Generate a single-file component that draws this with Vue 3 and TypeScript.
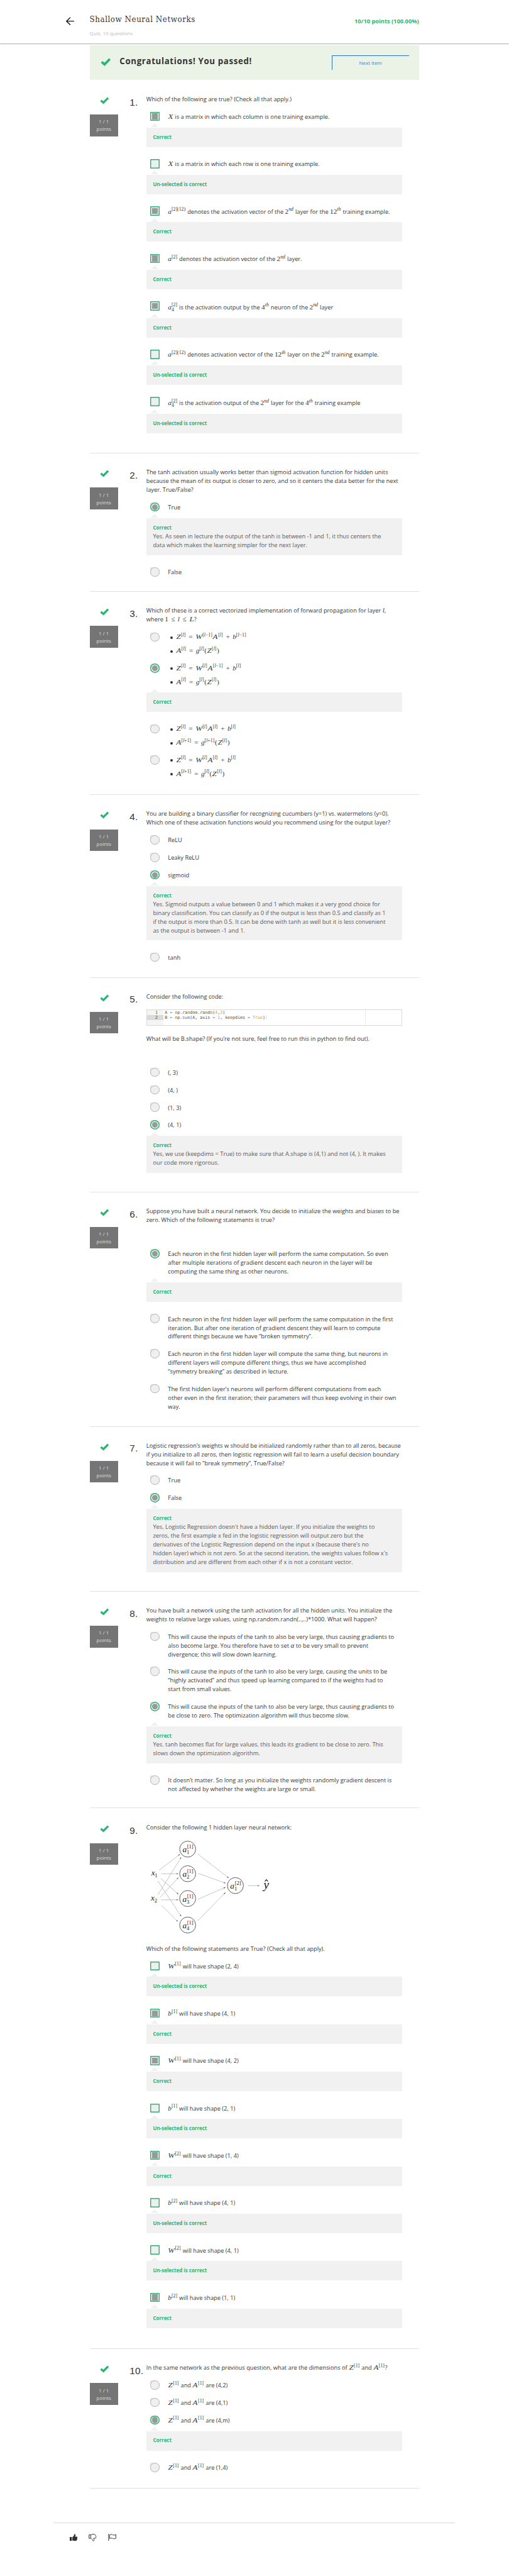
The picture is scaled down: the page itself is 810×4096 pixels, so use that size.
<script setup lang="ts">
import { h, type FunctionalComponent } from 'vue'

/**
 * Text with inline formulas: "$...$" marks a formula, and inside it
 * "^{...}" is raised and "_{...}" lowered, under whatever follows it.
 */
const letters = (s: string) =>
  s
    .split(/([A-Z]|[a-zα]+)/)
    .filter(Boolean)
    .map((part) => {
      if (/[A-Z]/.test(part)) return h('i', { class: 'cap' }, part)
      return /[a-zα]/.test(part) ? h('i', part) : part
    })

const formula = (src: string) =>
  src
    .split(/([\^_]\{[^}]*\})/)
    .filter(Boolean)
    .map((part) => {
      if (part.startsWith('^{')) return h('span', { class: 'up' }, letters(part.slice(2, -1)))
      if (part.startsWith('_{')) return h('span', { class: 'down' }, letters(part.slice(2, -1)))
      return letters(part)
    })

const Rich: FunctionalComponent<{ text: string }> = (props) =>
  h(
    'span',
    { class: 'rich' },
    props.text.split('$').map((part, i) => (i % 2 ? h('span', { class: 'math' }, formula(part)) : part)),
  )
Rich.props = ['text']

interface Option {
  lines?: string[]
  bullets?: string[]
  on?: boolean
  tall?: boolean
  feedback?: string
  why?: string[]
}
interface Question {
  height: number
  shift?: number
  kind: 'box' | 'dot'
  prompt: string[]
  code?: boolean
  network?: boolean
  after?: string
  gap?: number
  options: Option[]
}

const OK = 'Correct'
const UN = 'Un-selected is correct'

const questions: Question[] = [
  {
    height: 896.2,
    shift: 2,
    kind: 'box',
    prompt: ['Which of the following are true? (Check all that apply.)'],
    options: [
      { lines: ['$X$ is a matrix in which each column is one training example.'], on: true, feedback: OK },
      { lines: ['$X$ is a matrix in which each row is one training example.'], feedback: UN },
      { lines: ['$a^{[2](12)}$ denotes the activation vector of the $2^{nd}$ layer for the $12^{th}$ training example.'], on: true, feedback: OK },
      { lines: ['$a^{[2]}$ denotes the activation vector of the $2^{nd}$ layer.'], on: true, feedback: OK },
      { lines: ['$a_{4}^{[2]}$ is the activation output by the $4^{th}$ neuron of the $2^{nd}$ layer'], on: true, tall: true, feedback: OK },
      { lines: ['$a^{[2](12)}$ denotes activation vector of the $12^{th}$ layer on the $2^{nd}$ training example.'], feedback: UN },
      { lines: ['$a_{4}^{[2]}$ is the activation output of the $2^{nd}$ layer for the $4^{th}$ training example'], tall: true, feedback: UN },
    ],
  },
  {
    height: 331.7,
    kind: 'dot',
    prompt: [
      'The tanh activation usually works better than sigmoid activation function for hidden units',
      'because the mean of its output is closer to zero, and so it centers the data better for the next',
      'layer. True/False?',
    ],
    options: [
      {
        lines: ['True'],
        on: true,
        feedback: OK,
        why: [
          'Yes. As seen in lecture the output of the tanh is between -1 and 1, it thus centers the',
          'data which makes the learning simpler for the next layer.',
        ],
      },
      { lines: ['False'] },
    ],
  },
  {
    height: 487.2,
    kind: 'dot',
    gap: 20.4,
    prompt: [
      'Which of these is a correct vectorized implementation of forward propagation for layer $l$,',
      'where $1 ≤ l ≤ L$?',
    ],
    options: [
      { bullets: ['$Z^{[l]} = W^{[l−1]}A^{[l]} + b^{[l−1]}$', '$A^{[l]} = g^{[l]}(Z^{[l]})$'] },
      { bullets: ['$Z^{[l]} = W^{[l]}A^{[l−1]} + b^{[l]}$', '$A^{[l]} = g^{[l]}(Z^{[l]})$'], on: true, feedback: OK },
      { bullets: ['$Z^{[l]} = W^{[l]}A^{[l]} + b^{[l]}$', '$A^{[l+1]} = g^{[l+1]}(Z^{[l]})$'] },
      { bullets: ['$Z^{[l]} = W^{[l]}A^{[l]} + b^{[l]}$', '$A^{[l+1]} = g^{[l]}(Z^{[l]})$'] },
    ],
  },
  {
    height: 437.6,
    kind: 'dot',
    prompt: [
      'You are building a binary classifier for recognizing cucumbers (y=1) vs. watermelons (y=0).',
      'Which one of these activation functions would you recommend using for the output layer?',
    ],
    options: [
      { lines: ['ReLU'] },
      { lines: ['Leaky ReLU'] },
      {
        lines: ['sigmoid'],
        on: true,
        feedback: OK,
        why: [
          'Yes. Sigmoid outputs a value between 0 and 1 which makes it a very good choice for',
          'binary classification. You can classify as 0 if the output is less than 0.5 and classify as 1',
          'if the output is more than 0.5. It can be done with tanh as well but it is less convenient',
          'as the output is between -1 and 1.',
        ],
      },
      { lines: ['tanh'] },
    ],
  },
  {
    height: 514.9,
    kind: 'dot',
    prompt: ['Consider the following code:'],
    code: true,
    after: 'What will be B.shape? (If you’re not sure, feel free to run this in python to find out).',
    gap: 59,
    options: [
      { lines: ['(, 3)'] },
      { lines: ['(4, )'] },
      { lines: ['(1, 3)'] },
      {
        lines: ['(4, 1)'],
        on: true,
        feedback: OK,
        why: [
          'Yes, we use (keepdims = True) to make sure that A.shape is (4,1) and not (4, ). It makes',
          'our code more rigorous.',
        ],
      },
    ],
  },
  {
    height: 561.3,
    kind: 'dot',
    gap: 59,
    prompt: [
      'Suppose you have built a neural network. You decide to initialize the weights and biases to be',
      'zero. Which of the following statements is true?',
    ],
    options: [
      {
        lines: [
          'Each neuron in the first hidden layer will perform the same computation. So even',
          'after multiple iterations of gradient descent each neuron in the layer will be',
          'computing the same thing as other neurons.',
        ],
        on: true,
        feedback: OK,
      },
      {
        lines: [
          'Each neuron in the first hidden layer will perform the same computation in the first',
          'iteration. But after one iteration of gradient descent they will learn to compute',
          'different things because we have “broken symmetry”.',
        ],
      },
      {
        lines: [
          'Each neuron in the first hidden layer will compute the same thing, but neurons in',
          'different layers will compute different things, thus we have accomplished',
          '“symmetry breaking” as described in lecture.',
        ],
      },
      {
        lines: [
          'The first hidden layer’s neurons will perform different computations from each',
          'other even in the first iteration; their parameters will thus keep evolving in their own',
          'way.',
        ],
      },
    ],
  },
  {
    height: 395.2,
    kind: 'dot',
    prompt: [
      'Logistic regression’s weights w should be initialized randomly rather than to all zeros, because',
      'if you initialize to all zeros, then logistic regression will fail to learn a useful decision boundary',
      'because it will fail to “break symmetry”, True/False?',
    ],
    options: [
      { lines: ['True'] },
      {
        lines: ['False'],
        on: true,
        feedback: OK,
        why: [
          "Yes, Logistic Regression doesn't have a hidden layer. If you initialize the weights to",
          'zeros, the first example x fed in the logistic regression will output zero but the',
          "derivatives of the Logistic Regression depend on the input x (because there's no",
          "hidden layer) which is not zero. So at the second iteration, the weights values follow x's",
          'distribution and are different from each other if x is not a constant vector.',
        ],
      },
    ],
  },
  {
    height: 519.3,
    kind: 'dot',
    prompt: [
      'You have built a network using the tanh activation for all the hidden units. You initialize the',
      'weights to relative large values, using np.random.randn(..,..)*1000. What will happen?',
    ],
    options: [
      {
        lines: [
          'This will cause the inputs of the tanh to also be very large, thus causing gradients to',
          'also become large. You therefore have to set $α$ to be very small to prevent',
          'divergence; this will slow down learning.',
        ],
      },
      {
        lines: [
          'This will cause the inputs of the tanh to also be very large, causing the units to be',
          '“highly activated” and thus speed up learning compared to if the weights had to',
          'start from small values.',
        ],
      },
      {
        lines: [
          'This will cause the inputs of the tanh to also be very large, thus causing gradients to',
          'be close to zero. The optimization algorithm will thus become slow.',
        ],
        on: true,
        feedback: OK,
        why: [
          'Yes. tanh becomes flat for large values, this leads its gradient to be close to zero. This',
          'slows down the optimization algorithm.',
        ],
      },
      {
        lines: [
          'It doesn’t matter. So long as you initialize the weights randomly gradient descent is',
          'not affected by whether the weights are large or small.',
        ],
      },
    ],
  },
  {
    height: 1296,
    shift: 1.5,
    kind: 'box',
    prompt: ['Consider the following 1 hidden layer neural network:'],
    network: true,
    after: 'Which of the following statements are True? (Check all that apply).',
    options: [
      { lines: ['$W^{[1]}$ will have shape (2, 4)'], feedback: UN },
      { lines: ['$b^{[1]}$ will have shape (4, 1)'], on: true, feedback: OK },
      { lines: ['$W^{[1]}$ will have shape (4, 2)'], on: true, feedback: OK },
      { lines: ['$b^{[1]}$ will have shape (2, 1)'], feedback: UN },
      { lines: ['$W^{[2]}$ will have shape (1, 4)'], on: true, feedback: OK },
      { lines: ['$b^{[2]}$ will have shape (4, 1)'], feedback: UN },
      { lines: ['$W^{[2]}$ will have shape (4, 1)'], feedback: UN },
      { lines: ['$b^{[2]}$ will have shape (1, 1)'], on: true, feedback: OK },
    ],
  },
  {
    height: 335.2,
    kind: 'dot',
    prompt: ['In the same network as the previous question, what are the dimensions of $Z^{[1]}$ and $A^{[1]}$?'],
    options: [
      { lines: ['$Z^{[1]}$ and $A^{[1]}$ are (4,2)'] },
      { lines: ['$Z^{[1]}$ and $A^{[1]}$ are (4,1)'] },
      { lines: ['$Z^{[1]}$ and $A^{[1]}$ are (4,m)'], on: true, feedback: OK },
      { lines: ['$Z^{[1]}$ and $A^{[1]}$ are (1,4)'] },
    ],
  },
]

const edges = [
  [31, 91.2, 80.2, 53.4],
  [35.2, 100.1, 76, 100.1],
  [34.1, 110.9, 76.5, 149],
  [27.3, 117.6, 83.3, 201.6],
  [27.9, 150.1, 83.3, 60.9],
  [33.1, 156.6, 76.5, 109.4],
  [35.2, 162.6, 76, 162.6],
  [36.2, 175.5, 75, 214.4],
  [123.6, 53, 197.3, 110.1],
  [124.6, 99.1, 189.5, 122.6],
  [123.6, 161.2, 189.5, 132.6],
  [123.6, 212.3, 189.5, 145.1],
  [243.9, 128.7, 270.5, 128.7],
]
const nodes = [
  { x: 99, y: 41, layer: 1, unit: 1 },
  { x: 99, y: 100, layer: 1, unit: 2 },
  { x: 99, y: 159.5, layer: 1, unit: 3 },
  { x: 99, y: 223, layer: 1, unit: 4 },
  { x: 213.5, y: 128.4, layer: 2, unit: 1 },
]
</script>

<template>
  <div class="page">
    <header class="top">
      <svg class="back" viewBox="0 0 20 20" width="20" height="20">
        <path d="M19.5 10H1.5M10.5 1L1.2 10l9.3 9" fill="none" stroke="#1f1f1f" stroke-width="2.2" />
      </svg>
      <div class="names">
        <h1>Shallow Neural Networks</h1>
        <p>Quiz, 10 questions</p>
      </div>
      <strong class="score">10/10 points (100.00%)</strong>
    </header>

    <main class="body">
      <section class="banner">
        <svg class="tick big" viewBox="0 0 22 17">
          <path d="M2.2 8.8L8.4 14L19.8 2.4" />
        </svg>
        <h2>Congratulations! You passed!</h2>
        <a class="next">Next Item</a>
      </section>

      <section
        v-for="(q, i) in questions"
        :key="i"
        class="question"
        :style="{ height: q.height + 'px', paddingTop: 34.7 + (q.shift ?? 0) + 'px' }"
      >
        <aside class="side">
          <svg class="tick" viewBox="0 0 22 17"><path d="M2.2 8.8L8.4 14L19.8 2.4" /></svg>
          <div class="points"><span>1 / 1</span><span>points</span></div>
        </aside>
        <div class="number">{{ i + 1 }}.</div>
        <div class="content">
          <div class="prompt">
            <div v-for="l in q.prompt" :key="l" class="line"><Rich :text="l" /></div>
          </div>

          <div v-if="q.code" class="code">
            <div class="gutter">
              <span>1</span>
              <span class="active">2</span>
            </div>
            <div class="source">
              <div>A <b class="op">=</b> np.random.randn(<b class="num">4</b>,<b class="num">3</b>)</div>
              <div>
                B <b class="op">=</b> np.<b class="fn">sum</b>(A, axis <b class="op">=</b> <b class="num">1</b>, keepdims
                <b class="op">=</b> <b class="num">True</b>)<i class="caret"></i>
              </div>
            </div>
          </div>

          <svg v-if="q.network" class="network" viewBox="0 0 614 269" width="614" height="269">
            <defs>
              <marker id="tip" viewBox="0 0 4 4" refX="3.4" refY="2" markerWidth="4" markerHeight="4" orient="auto">
                <path d="M0 0.4L4 2L0 3.6z" fill="#777" />
              </marker>
            </defs>
            <line
              v-for="(e, k) in edges"
              :key="k"
              :x1="e[0]"
              :y1="e[1]"
              :x2="e[2]"
              :y2="e[3]"
              stroke="#b4b4b4"
              stroke-width="1.2"
              marker-end="url(#tip)"
            />
            <g v-for="n in nodes" :key="n.x + '-' + n.y">
              <circle :cx="n.x" :cy="n.y" r="19.2" fill="none" stroke="#333" stroke-width="1.2" />
              <text :x="n.x - 12.5" :y="n.y + 7.5" class="var">a</text>
              <text :x="n.x - 1.5" :y="n.y - 1.5" class="idx">[{{ n.layer }}]</text>
              <text :x="n.x - 2.5" :y="n.y + 12" class="idx">{{ n.unit }}</text>
            </g>
            <text x="11.5" y="104.5" class="var">x</text>
            <text x="20" y="108.5" class="idx">1</text>
            <text x="10.5" y="164.3" class="var">x</text>
            <text x="19.3" y="168.5" class="idx">2</text>
            <text x="281" y="135" class="hat">y</text>
            <path d="M284 118.4l3.8-4 3.8 4" fill="none" stroke="#111" stroke-width="1.6" />
          </svg>

          <div v-if="q.after" class="prompt">
            <div class="line">{{ q.after }}</div>
          </div>

          <div class="options" :style="{ paddingTop: (q.gap ?? 19.4) + 'px' }">
            <div v-for="(o, k) in q.options" :key="k" class="option" :class="{ marked: o.feedback, tall: o.tall }">
              <div class="choice">
                <span class="control" :class="[q.kind, { on: o.on }]"><span class="ring"><span class="fill"></span></span></span>
                <div v-if="o.lines" class="text">
                  <div v-for="l in o.lines" :key="l" class="line"><Rich :text="l" /></div>
                </div>
                <ul v-else class="bullets">
                  <li v-for="l in o.bullets" :key="l" class="line"><Rich :text="l" /></li>
                </ul>
              </div>
              <div v-if="o.feedback" class="feedback">
                <strong>{{ o.feedback }}</strong>
                <div v-for="l in o.why" :key="l" class="line">{{ l }}</div>
              </div>
            </div>
          </div>
        </div>
      </section>
    </main>

    <footer class="foot">
      <svg width="19" height="17" viewBox="0 0 19 17">
        <path d="M0 7.6h5v9.2H0zM6.3 8c2-1.2 4-3.6 4.6-6.8C11-.2 14 0 14 3c0 1.5-.6 2.7-1 3.7h4.4c1.5.3 1.9 1.7.9 2.9.6 1 .4 2-.5 2.6.2 1.1-.1 1.8-.9 2.3 0 1.5-.8 2.3-2.3 2.3h-3.3c-2 0-3.4-.9-5-1z" fill="#333" />
      </svg>
      <svg width="19" height="19" viewBox="0 0 19 19">
        <path d="M1 2.4h4v8.2H1zM5 2.4c2-.3 3.5-1.4 5.5-1.4h3.3c1.7 0 2.1 1 2.1 2 1 .5 1.1 1.3.9 2.1 1 .7 1.1 1.6.6 2.5.9 1.2.3 2.7-1.2 2.9h-4c.5 1.1.9 2.3.9 3.7 0 4-2.9 3.7-3 1.9-.5-2.6-2.3-4.6-5.1-5.5" fill="none" stroke="#333" stroke-width="1.5" stroke-linejoin="round" />
      </svg>
      <svg class="flag" width="20" height="17" viewBox="0 0 20 17">
        <path d="M1.2 0v17M3.6 2.6c3-1.7 5.5-1.5 7.6-.3 2 1.1 4.6 1 7.4-.6v8.8c-2.8 1.5-5.3 1.6-7.4.5-2.3-1.2-4.8-1.2-7.6.2z" fill="none" stroke="#333" stroke-width="1.5" />
      </svg>
    </footer>
  </div>
</template>

<style>
body {
  background: #fff;
}
.rich .math {
  font-family: 'Liberation Serif', serif;
  font-size: 16.9px;
  line-height: 1px;
  white-space: pre;
  word-spacing: 0.14em;
}
.rich .up,
.rich .down {
  position: relative;
  font-size: 11.8px;
  line-height: 1px;
}
.rich .up {
  top: -6.5px;
  margin-right: 1px;
}
.rich .down {
  display: inline-block;
  width: 0;
  top: 5px;
}
.rich .cap {
  display: inline-block;
  margin: 0 0.08em;
  transform: scaleX(1.15);
}
</style>

<style scoped>
.page {
  zoom: 0.6634;
  width: 1221px;
  height: 6174px;
  overflow: hidden;
  box-sizing: border-box;
  font-family: 'Open Sans', 'Noto Sans', sans-serif;
  font-size: 14px;
  line-height: 21px;
  color: #373737;
  background: #fff;
}
h1,
h2,
p,
ul {
  margin: 0;
  padding: 0;
  font-weight: 400;
}
.top {
  height: 104px;
  box-sizing: border-box;
  padding: 0 216px 0 159px;
  display: flex;
  align-items: flex-start;
  box-shadow: 0 1px 2px #aaa;
}
.back {
  margin-top: 41px;
  margin-right: 36px;
}
.names {
  flex: 1;
}
h1 {
  margin-top: 33px;
  font: 20px/26px 'DejaVu Serif Condensed', 'DejaVu Serif', serif;
  letter-spacing: 0.8px;
  white-space: nowrap;
}
.names p {
  margin-top: 10px;
  font-size: 12px;
  color: #bdbdbd;
}
.score {
  margin-top: 41px;
  font-size: 14px;
  color: #2ab573;
}
.body {
  width: 790px;
  margin: 4px 0 0 215px;
}
.banner {
  height: 83px;
  display: flex;
  align-items: flex-start;
  background: #ebf3e6;
}
.tick {
  display: block;
  width: 22px;
  height: 17px;
  overflow: visible;
}
.tick path {
  fill: none;
  stroke: #2bb573;
  stroke-width: 5;
}
.tick.big {
  width: 25px;
  height: 19px;
  margin: 30px 0 0 26px;
}
h2 {
  flex: 1;
  margin: 24px 0 0 21px;
  font-size: 20px;
  line-height: 28px;
  font-weight: 700;
  letter-spacing: 1px;
  color: #333;
}
.next {
  width: 184px;
  height: 34px;
  margin: 24px 24px 0 0;
  border: solid #2a73cc;
  border-width: 1.6px 0 0 1.6px;
  font-size: 12px;
  line-height: 34px;
  text-align: center;
  color: #3f80d6;
}
.question {
  display: flex;
  align-items: flex-start;
  box-sizing: border-box;
  border-bottom: 2px solid #e1e1e1;
}
.side {
  width: 68px;
  margin-right: 28px;
}
.side .tick {
  margin: 4.5px 0 0 24px;
}
.points {
  height: 52px;
  margin-top: 25.5px;
  display: flex;
  flex-direction: column;
  justify-content: center;
  align-items: center;
  background: #757575;
  color: #dcdcdc;
  font-size: 12px;
  line-height: 18px;
}
.number {
  width: 40px;
  padding-top: 4px;
  font: 23px/26px 'Liberation Sans', Arial, sans-serif;
  letter-spacing: 0.5px;
  color: #333;
}
.content {
  width: 614px;
}
.line {
  height: 21px;
  white-space: nowrap;
}
.code {
  height: 40px;
  margin: 19.5px 0 20.5px;
  box-sizing: border-box;
  display: flex;
  border: 2px solid #d9d9d9;
  font: 10px/12.2px 'DejaVu Sans Mono', monospace;
  color: #4d4d4c;
}
.gutter {
  width: 39px;
  background: #f5f5f5;
  display: flex;
  flex-direction: column;
  text-align: right;
}
.gutter span {
  padding-right: 13px;
}
.gutter .active {
  background: #dadada;
}
.source {
  flex: 1;
  margin-right: 86px;
  padding-left: 4px;
  border-right: 1px solid #e8e8e8;
  white-space: nowrap;
}
.source b {
  font-weight: 400;
}
.op {
  color: #3e999f;
}
.num {
  color: #f5871f;
}
.fn {
  color: #4271ae;
}
.caret {
  display: inline-block;
  width: 1px;
  height: 11px;
  margin-left: 1px;
  vertical-align: -2px;
  background: #ddd;
}
.network {
  display: block;
}
.var,
.hat,
.idx {
  font-family: 'Liberation Serif', serif;
  fill: #222;
}
.var {
  font-size: 20px;
  font-style: italic;
}
.idx {
  font-size: 13px;
}
.hat {
  font-size: 29px;
  font-style: italic;
  fill: #111;
}
.option {
  padding-bottom: 19.3px;
}
.option.marked {
  padding-bottom: 29.3px;
}
.choice {
  display: flex;
}
.control {
  width: 22px;
  height: 22px;
  margin: 0 20px 0 10px;
  flex: none;
  display: block;
}
.control.dot {
  border-radius: 3px 11px 11px 11px;
  background: #e2e2e2;
}
.ring {
  box-sizing: border-box;
  width: 22px;
  height: 22px;
  display: flex;
  align-items: center;
  justify-content: center;
  background: #efefef;
  border-radius: 2px;
}
.dot .ring {
  border: 1px solid #b8b8b8;
  border-radius: 11px;
}
.box .ring,
.dot.on .ring {
  border: 0;
  box-shadow: inset 0 0 0 2.2px #2db373;
}
.on .fill {
  width: 14px;
  height: 14px;
  background: #999;
}
.dot .fill {
  border-radius: 7px;
}
.text {
  padding-top: 1.7px;
}
.tall .text {
  padding-top: 4px;
}
.bullets {
  list-style: none;
  padding: 1px 0 0;
}
.bullets li {
  display: flex;
  align-items: center;
}
.bullets li::before {
  content: '';
  width: 6px;
  height: 6px;
  border-radius: 3px;
  margin: 2px 8px 0 5px;
  background: #333;
}
.bullets li + li {
  margin-top: 12.1px;
}
.feedback {
  position: relative;
  margin: 14.9px 0 0;
  padding: 13.5px 16px 13.2px;
  background: #f1f1f1;
  color: #5a5a5a;
}
.feedback::before {
  content: '';
  position: absolute;
  left: 11px;
  top: -10px;
  border: solid transparent;
  border-width: 0 10px 10px;
  border-bottom-color: #f1f1f1;
}
.feedback strong {
  display: block;
  height: 20px;
  font-size: 12px;
  line-height: 19px;
  color: #2db373;
}
.foot {
  margin: 80.4px 130px 0;
  border-top: 1.6px solid #d6d6d6;
  padding: 25.5px 37px 0;
  display: flex;
  gap: 26.5px;
}
.flag {
  margin-left: 2px;
}
</style>
